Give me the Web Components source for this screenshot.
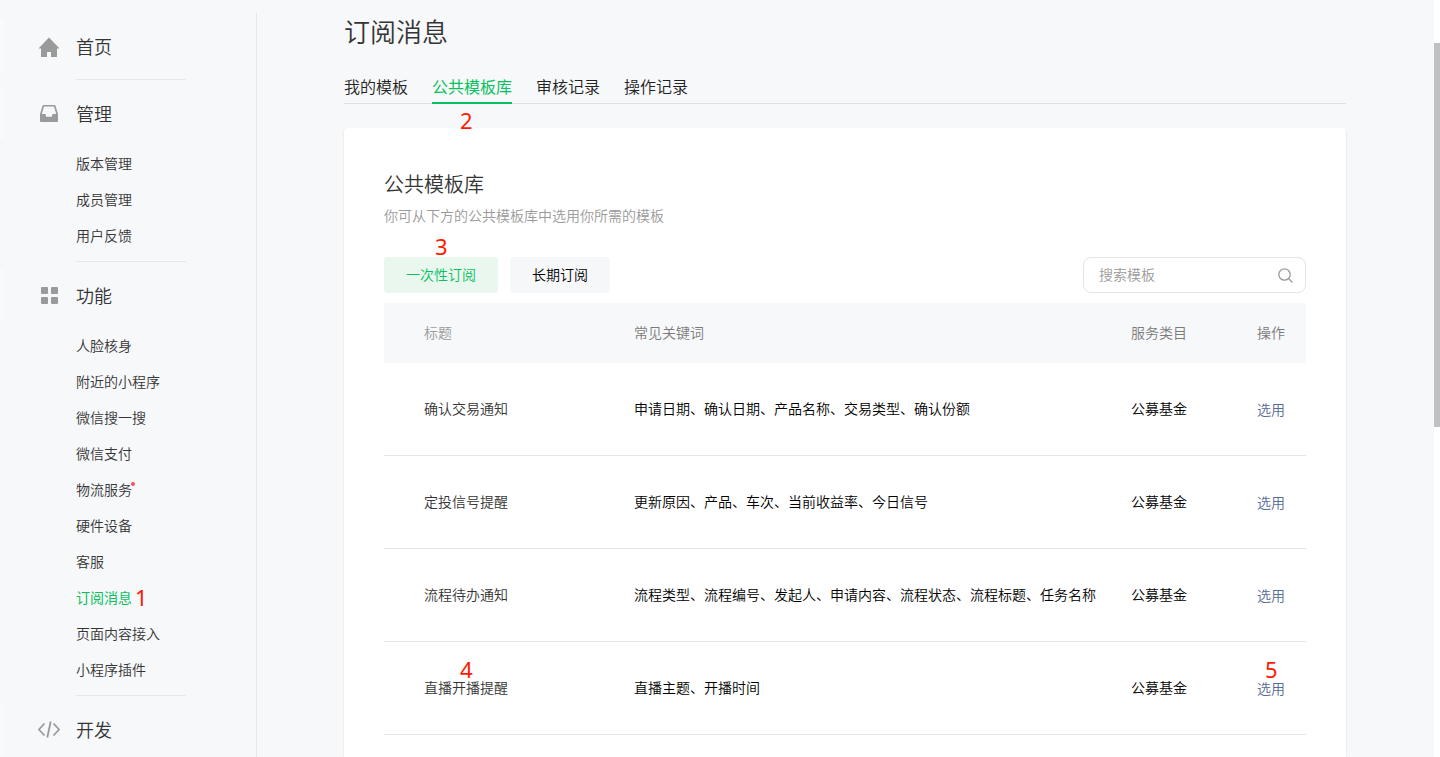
<!DOCTYPE html>
<html lang="zh-CN">
<head>
<meta charset="utf-8">
<meta name="viewport" content="width=device-width, initial-scale=1">
<title>订阅消息</title>
<style>
  html, body { margin: 0; height: 100%; }
  body {
    background: #f7f8fa;
    color: #353535;
    font: 350 14px/20px "Noto Sans CJK SC", sans-serif;
    overflow: hidden;
  }
</style>
</head>
<body>
<app-shell>
  <side-nav slot="nav">
    <nav-section label="首页" icon="home"></nav-section>
    <nav-section label="管理" icon="inbox">
      <nav-item>版本管理</nav-item>
      <nav-item>成员管理</nav-item>
      <nav-item>用户反馈</nav-item>
    </nav-section>
    <nav-section label="功能" icon="grid">
      <nav-item>人脸核身</nav-item>
      <nav-item>附近的小程序</nav-item>
      <nav-item>微信搜一搜</nav-item>
      <nav-item>微信支付</nav-item>
      <nav-item dot>物流服务</nav-item>
      <nav-item>硬件设备</nav-item>
      <nav-item>客服</nav-item>
      <nav-item active step="1">订阅消息</nav-item>
      <nav-item>页面内容接入</nav-item>
      <nav-item>小程序插件</nav-item>
    </nav-section>
    <nav-section label="开发" icon="code"></nav-section>
  </side-nav>

  <page-header heading="订阅消息">
    <tab-link>我的模板</tab-link>
    <tab-link active step="2">公共模板库</tab-link>
    <tab-link>审核记录</tab-link>
    <tab-link>操作记录</tab-link>
  </page-header>

  <content-card heading="公共模板库" hint="你可从下方的公共模板库中选用你所需的模板">
    <filter-button slot="filters" active step="3">一次性订阅</filter-button>
    <filter-button slot="filters">长期订阅</filter-button>
    <search-box slot="search" placeholder="搜索模板"></search-box>
    <template-table></template-table>
  </content-card>
</app-shell>

<script>
  const define = (name, html, setup) => {
    const template = document.createElement('template');
    template.innerHTML = html;
    customElements.define(name, class extends HTMLElement {
      constructor() {
        super();
        this.attachShadow({ mode: 'open' }).append(template.content.cloneNode(true));
      }
      connectedCallback() {
        if (setup && !this.ready) { this.ready = true; setup(this, this.shadowRoot); }
      }
    });
  };

  const addStep = (host, parent) => {
    if (!host.hasAttribute('step')) return;
    const mark = document.createElement('step-mark');
    mark.textContent = host.getAttribute('step');
    parent.append(mark);
  };

  const ICONS = {
    home: '<path d="M11 2.5 21.500 13.500H19V21.500Q19 22 18.500 22H13V17H9V22H3.500Q3 22 3 21.500V13.500H.5Z"/>',
    inbox: '<path fill-rule="evenodd" d="M5.500 3H16.500Q17.300 3 17.500 3.800L20 12V19Q20 20 19 20H3Q2 20 2 19V12L4.500 3.800Q4.700 3 5.500 3ZM6 4.500 3.800 12H7.500L8.200 14.800H13.800L14.500 12H18.200L16 4.500Z"/>',
    grid: '<rect x="3" y="3" width="7" height="7" rx="1"/><rect x="13" y="3" width="7" height="7" rx="1"/><rect x="3" y="13" width="7" height="7" rx="1"/><rect x="13" y="13" width="7" height="7" rx="1"/>',
    code: '<path fill="none" stroke="currentColor" stroke-width="1.800" d="M6.500 5.500.9 11.500 6.500 17.500M15.500 5.500 21.100 11.500 15.500 17.500M12.700 3.500 9.300 19.500"/>'
  };

  /* Red walkthrough number laid over the control it points at */
  define('step-mark', `
    <style>
      :host { position: absolute; z-index: 1; color: #ff1a00; font: 400 22px/20px "Noto Sans", sans-serif; pointer-events: none; }
    </style><slot></slot>`);

  define('app-shell', `
    <style>
      :host { display: flex; height: 100vh; overflow: hidden; }
      main { flex: 1; min-width: 0; display: flex; flex-direction: column; padding: 14px 88px 0 87px; }
      .track { flex: none; display: grid; grid-template-rows: 384fr 330fr; width: 6px; background: #fff; padding-top: 43px; }
      .thumb { background: #c1c1c1; }
    </style>
    <slot name="nav"></slot>
    <main><slot></slot></main>
    <div class="track"><div class="thumb"></div></div>`);

  define('side-nav', `
    <style>
      :host { flex: none; width: 257px; display: flex; }
      nav { flex: 1; margin-top: 13px; border-right: 1px solid #e7e7eb; }
    </style>
    <nav><slot></slot></nav>`);

  define('nav-section', `
    <style>
      :host { display: block; }
      h2 {
        display: flex; align-items: center; gap: 16px;
        margin: 7px 0; padding-left: 34px; height: 52px;
        border-left: 4px solid #f9fafb;
        font-size: 18px; line-height: 28px; font-weight: inherit;
      }
      svg { width: 22px; height: 23px; color: #9a9a9a; fill: currentColor; }
      ul { margin: 0; padding: 0 0 7px; list-style: none; }
      :host(:empty) ul { padding: 0; }
      hr { margin: 0 70px 0 76px; border: 0; height: 1px; background: #e7e7eb; }
      :host(:last-child) hr { display: none; }
    </style>
    <h2><svg viewBox="0 0 22 23" aria-hidden="true"></svg><span></span></h2>
    <ul><slot></slot></ul>
    <hr>`, (host, root) => {
      root.querySelector('span').textContent = host.getAttribute('label');
      root.querySelector('svg').innerHTML = ICONS[host.getAttribute('icon')];
    });

  define('nav-item', `
    <style>
      :host { display: list-item; list-style: none; padding-left: 76px; }
      a { position: relative; display: inline-block; vertical-align: top; padding-bottom: 2px; line-height: 34px; color: inherit; text-decoration: none; }
      :host([active]) a { color: #07c160; font-weight: 400; }
      :host([dot]) a::after {
        content: ""; position: absolute; left: 100%; top: 10px; margin-left: -1px;
        width: 4px; height: 4px; border-radius: 50%; background: #fa5151;
      }
      step-mark { left: 100%; top: 7px; margin-left: 3px; }
    </style>
    <a href="#"><slot></slot></a>`, (host, root) => addStep(host, root.querySelector('a')));

  define('page-header', `
    <style>
      :host { display: block; }
      h1 { margin: 0 0 22px; font-size: 26px; line-height: 34px; font-weight: inherit; }
      nav { display: flex; gap: 24px; box-shadow: inset 0 -1px #dfe0e2; }
    </style>
    <h1></h1>
    <nav><slot></slot></nav>`, (host, root) => {
      root.querySelector('h1').textContent = host.getAttribute('heading');
    });

  define('tab-link', `
    <style>
      :host { display: block; position: relative; }
      a { display: block; padding-bottom: 2px; font-size: 16px; line-height: 32px; color: #222; text-decoration: none; }
      :host([active]) a { color: #07c160; font-weight: 400; box-shadow: inset 0 -2px #07c160; }
      step-mark { left: 28px; top: 40px; }
    </style>
    <a href="#"><slot></slot></a>`, (host, root) => addStep(host, root));

  define('content-card', `
    <style>
      :host {
        display: block; flex: 1 0 auto; margin-top: 24px; padding: 40px 40px 0;
        background: #fff; border-radius: 4px 4px 0 0; box-shadow: 0 1px 2px rgba(150, 150, 150, .3);
      }
      h2 { margin: 0; font-size: 20px; line-height: 32px; font-weight: inherit; }
      p { margin: 0 0 27px; line-height: 30px; color: #9a9a9a; }
      .bar { display: flex; gap: 12px; margin-bottom: 10px; }
      .space { flex: 1; }
    </style>
    <h2></h2>
    <p></p>
    <div class="bar"><slot name="filters"></slot><span class="space"></span><slot name="search"></slot></div>
    <slot></slot>`, (host, root) => {
      root.querySelector('h2').textContent = host.getAttribute('heading');
      root.querySelector('p').textContent = host.getAttribute('hint');
    });

  define('filter-button', `
    <style>
      :host { display: block; position: relative; }
      button {
        display: block; height: 36px; padding: 0 22px 2px; border: 0; border-radius: 4px;
        background: #f6f7f9; color: #000; font: inherit; cursor: pointer;
      }
      :host([active]) button { background: #e9f7ef; color: #07c160; }
      step-mark { left: 51px; top: -21px; }
    </style>
    <button type="button"><slot></slot></button>`, (host, root) => addStep(host, root));

  define('search-box', `
    <style>
      :host { display: block; width: 223px; }
      label {
        display: flex; align-items: center; height: 36px; box-sizing: border-box;
        padding: 0 12px 0 15px; border: 1px solid #e4e4e6; border-radius: 8px; background: #fff;
      }
      input { flex: 1; min-width: 0; padding: 0 0 2px; border: 0; outline: 0; background: none; color: #353535; font: inherit; }
      input::placeholder { color: #9a9a9a; opacity: 1; }
      svg { flex: none; width: 15px; height: 15px; fill: none; stroke: #9a9a9a; stroke-width: 1.300; }
    </style>
    <label>
      <input type="search">
      <svg viewBox="0 0 15 15" aria-hidden="true"><circle cx="6.500" cy="6.500" r="5.700"/><path d="M10.500 10.500 14.500 14.500"/></svg>
    </label>`, (host, root) => {
      const input = root.querySelector('input');
      input.placeholder = host.getAttribute('placeholder');
      input.setAttribute('aria-label', input.placeholder);
    });

  const ROWS = [
    ['确认交易通知', '申请日期、确认日期、产品名称、交易类型、确认份额', '公募基金'],
    ['定投信号提醒', '更新原因、产品、车次、当前收益率、今日信号', '公募基金'],
    ['流程待办通知', '流程类型、流程编号、发起人、申请内容、流程状态、流程标题、任务名称', '公募基金'],
    ['直播开播提醒', '直播主题、开播时间', '公募基金', '4', '5']
  ];

  define('template-table', `
    <style>
      :host { display: block; }
      table { width: 100%; table-layout: fixed; border-collapse: separate; border-spacing: 0; }
      th, td { padding: 0 0 2px; text-align: left; font-weight: inherit; white-space: nowrap; }
      th { height: 58px; background: #f7f8fa; color: #7b7b7b; }
      td { position: relative; height: 90px; border-bottom: 1px solid #e4e5e7; color: #000; }
      td:last-child { height: 92px; padding-bottom: 0; }
      th:first-child { color: #9a9a9a; }
      td:first-child { color: #353535; }
      th:first-child, td:first-child { padding-left: 40px; }
      .title { width: 210px; }
      .kind { width: 126px; }
      .action { width: 49px; }
      a { color: #576b95; text-decoration: none; }
      step-mark { top: 17px; left: 8px; }
      td:first-child step-mark { left: 76px; }
    </style>
    <table>
      <thead><tr><th class="title">标题</th><th>常见关键词</th><th class="kind">服务类目</th><th class="action">操作</th></tr></thead>
      <tbody></tbody>
    </table>`, (host, root) => {
      const mark = n => n ? `<step-mark>${n}</step-mark>` : '';
      root.querySelector('tbody').innerHTML = ROWS.map(([title, words, kind, first, last]) =>
        `<tr><td>${title}${mark(first)}</td><td>${words}</td><td>${kind}</td><td><a href="#">选用</a>${mark(last)}</td></tr>`).join('');
    });
</script>
</body>
</html>
